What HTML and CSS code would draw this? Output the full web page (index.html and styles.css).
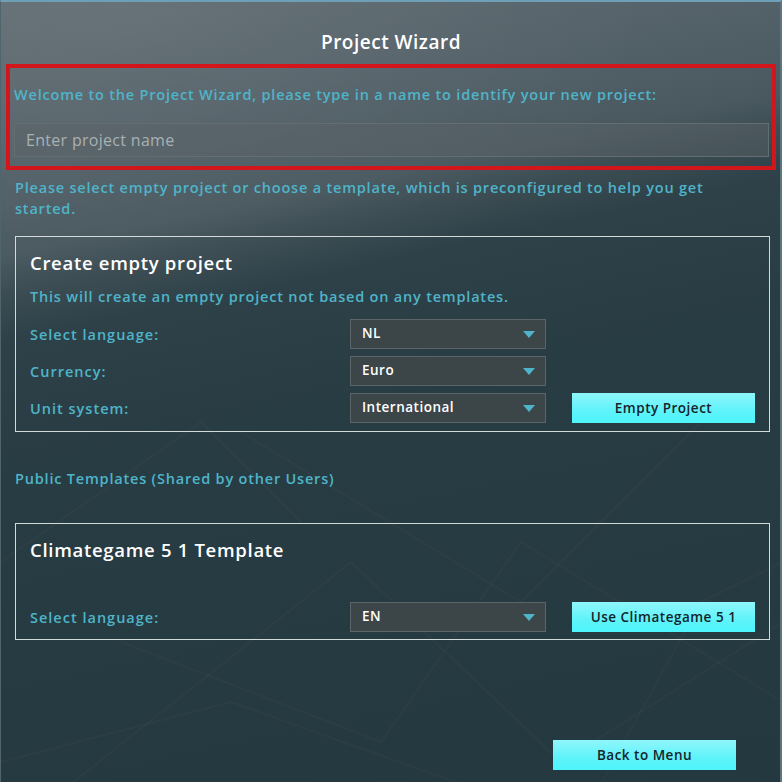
FILE: index.html
```html
<!DOCTYPE html>
<html>
<head>
<meta charset="utf-8">
<link rel="stylesheet" href="styles.css">
</head>
<body>
<div class="window">
  <h1 class="title">Project Wizard</h1>
  <section class="name-box">
    <p class="info">Welcome to the Project Wizard, please type in a name to identify your new project:</p>
    <div class="name-input">Enter project name</div>
  </section>
  <p class="info intro">Please select empty project or choose a template, which is preconfigured to help you get started.</p>

  <section class="panel panel-empty">
    <h2 class="panel-title">Create empty project</h2>
    <p class="info panel-desc">This will create an empty project not based on any templates.</p>
    <div class="row">
      <span class="label">Select language:</span>
      <div class="select">NL<span class="arrow"></span></div>
    </div>
    <div class="row">
      <span class="label">Currency:</span>
      <div class="select">Euro<span class="arrow"></span></div>
    </div>
    <div class="row">
      <span class="label">Unit system:</span>
      <div class="select">International<span class="arrow"></span></div>
      <div class="btn">Empty Project</div>
    </div>
  </section>

  <p class="info public">Public Templates (Shared by other Users)</p>

  <section class="panel panel-template">
    <h2 class="panel-title">Climategame 5 1 Template</h2>
    <div class="row row-template">
      <span class="label">Select language:</span>
      <div class="select">EN<span class="arrow"></span></div>
      <div class="btn">Use Climategame 5 1</div>
    </div>
  </section>

  <div class="footer">
    <div class="btn btn-back">Back to Menu</div>
  </div>
</div>
</body>
</html>
```
FILE: styles.css
```css
* { box-sizing: border-box; }
html, body { margin: 0; padding: 0; }
body {
  width: 782px;
  height: 782px;
  overflow: hidden;
  font-family: "Open Sans", "Noto Sans", sans-serif;
  background: #243840;
}
.window {
  width: 782px;
  height: 782px;
  border-top: 2px solid #6d9fb6;
  border-left: 1px solid #4f646c;
  border-right: 2px solid #5c7580;
  background:
    url("data:image/svg+xml;utf8,<svg xmlns='http://www.w3.org/2000/svg' width='782' height='782'><g stroke='%23ffffff' stroke-opacity='0.022' stroke-width='2' fill='none'><path d='M0 760 L230 700 L460 782'/><path d='M70 782 L350 560 L560 760 L782 620'/><path d='M120 640 L380 740 L520 540 L782 700'/><path d='M240 430 L520 600 L700 420'/><path d='M600 782 L700 600 L782 560'/><path d='M0 560 L200 420 L300 520'/></g></svg>"),
    radial-gradient(ellipse 70% 40% at 15% 0%, rgba(255,255,255,0.06), rgba(255,255,255,0) 100%),
    linear-gradient(168deg, #606c72 0%, #56636a 15%, #4a5960 27%, #3c4c53 31%, #2e4148 36%, #283c43 50%, #243840 100%);
  display: flex;
  flex-direction: column;
  padding: 0 12px 0 5px;
}
.title {
  margin: 26px 0 0 0;
  padding-left: 8px;
  height: 34px;
  font-size: 19px;
  font-weight: 600;
  color: #ffffff;
  text-align: center;
  line-height: 28px;
  letter-spacing: 0.5px;
}
.name-box {
  border: 4px solid #d2161c;
  margin: 2px 0 0 0;
  padding: 16px 3px 10px 4px;
  width: 770px;
  height: 106px;
}
.info {
  margin: 0;
  color: #4fb4c9;
  font-size: 14.5px;
  font-weight: 600;
  line-height: 21px;
  letter-spacing: 0.8px;
}
.name-input {
  margin-top: 18px;
  height: 34px;
  width: 755px;
  background: rgba(90, 100, 105, 0.45);
  border: 1px solid #646e72;
  color: #a9b0b2;
  font-size: 16px;
  line-height: 32px;
  padding-left: 11px;
  letter-spacing: 0.3px;
}
.intro {
  margin: 7px 0 0 9px;
  width: 720px;
}
.panel {
  margin-left: 9px;
  width: 755px;
  border: 1.5px solid #d2dadb;
}
.panel-empty {
  margin-top: 17px;
  height: 196px;
  padding: 12px 14px 0 14px;
}
.panel-title {
  margin: 0;
  font-size: 18.5px;
  font-weight: 600;
  color: #ffffff;
  line-height: 28px;
  letter-spacing: 0.7px;
}
.panel-desc {
  margin-top: 9px;
}
.row {
  display: flex;
  align-items: center;
  height: 30px;
  margin-top: 7px;
}
.panel-desc + .row { margin-top: 12px; }
.label {
  width: 320px;
  color: #4fb4c9;
  font-size: 14.5px;
  font-weight: 600;
  letter-spacing: 1px;
}
.select {
  position: relative;
  width: 196px;
  height: 30px;
  background: #3c4649;
  border: 1.5px solid #5b6467;
  color: #ffffff;
  font-size: 13.5px;
  font-weight: 600;
  line-height: 27px;
  padding-left: 11px;
  letter-spacing: 0.5px;
}
.arrow {
  position: absolute;
  right: 10px;
  top: 11px;
  width: 0;
  height: 0;
  border-left: 6px solid transparent;
  border-right: 6px solid transparent;
  border-top: 7px solid #4fb4c9;
}
.btn {
  margin-left: 26px;
  width: 183px;
  height: 30px;
  background: linear-gradient(180deg, #8ff6fb 0%, #5ef3fa 60%, #4ef5fc 100%);
  color: #16242a;
  font-size: 13.5px;
  font-weight: 600;
  text-align: center;
  line-height: 30px;
  letter-spacing: 0.5px;
}
.public {
  margin: 36px 0 0 9px;
}
.panel-template {
  margin-top: 34px;
  height: 117px;
  padding: 12px 14px 0 14px;
}
.row-template {
  margin-top: 38px;
}
.footer {
  display: flex;
  margin-top: 100px;
  padding-left: 547px;
}
.footer .btn {
  margin-left: 0;
  width: 183px;
  height: 30px;
}
```
